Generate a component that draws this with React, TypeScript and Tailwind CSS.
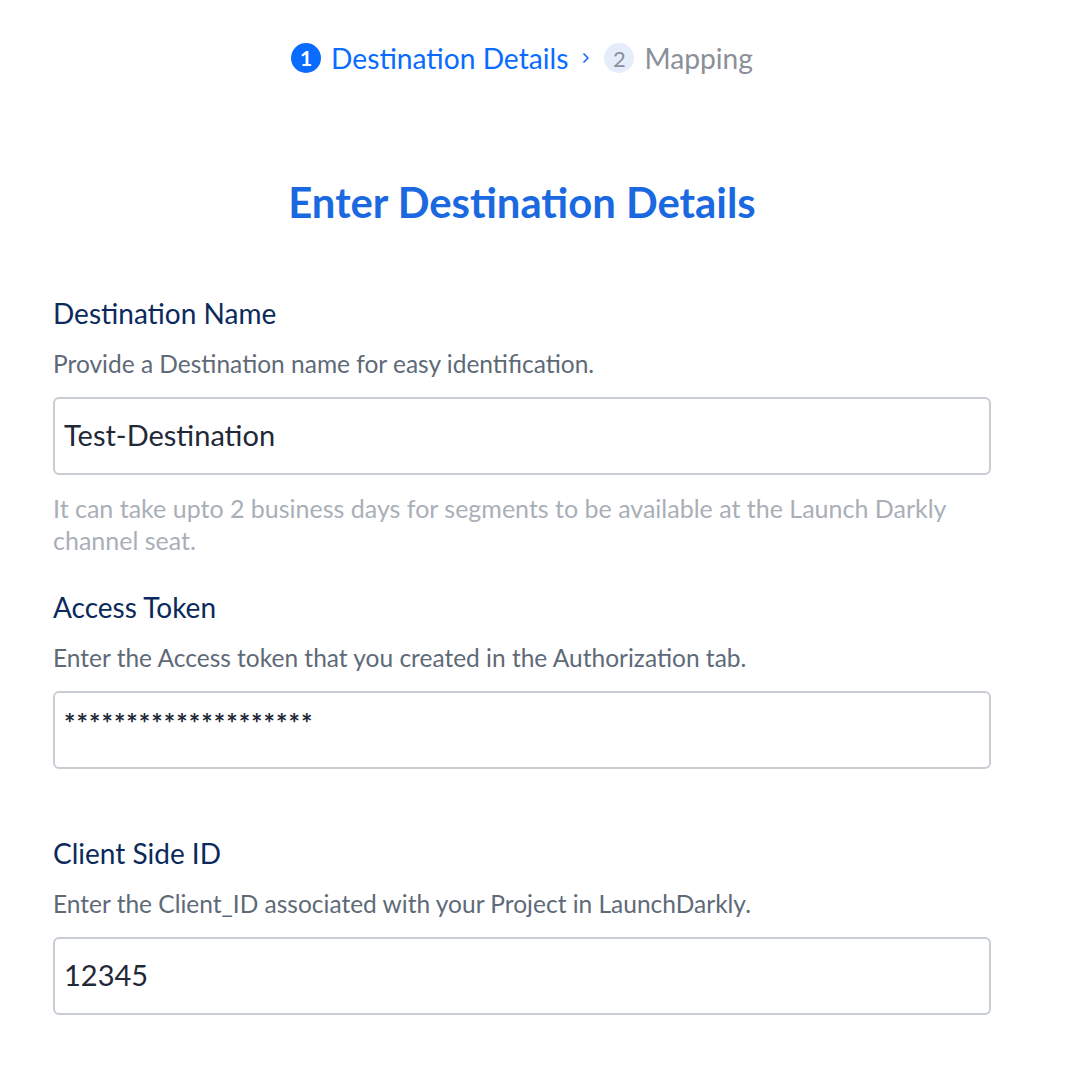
import { ChevronRight } from "lucide-react";

const font = { fontFamily: "Lato, 'Noto Sans', sans-serif" };

function Field({
  label,
  hint,
  value,
  note,
  mono,
}: {
  label: string;
  hint: string;
  value: string;
  note?: string;
  mono?: boolean;
}) {
  return (
    <div className="flex flex-col">
      <label className="text-[28px] leading-[36px] text-[#0b2a5c]">{label}</label>
      <p className="mt-[17px] text-[24.5px] leading-[32px] text-[#5e6a78]">{hint}</p>
      <div className="mt-[17px] h-[78px] rounded-[6px] border-2 border-[#c9cdd4] bg-white px-[9px] flex items-center">
        {mono ? (
          <span className="-mt-[14px] text-[27px] font-bold tracking-[1px] text-[#1f2937]">{value}</span>
        ) : (
          <span className="-mt-[2px] text-[29px] text-[#1f2937]">{value}</span>
        )}
      </div>
      {note !== undefined &&
        (note ? (
          <p className="mt-[17px] text-[25px] leading-[32px] text-[#a9afb7]">{note}</p>
        ) : (
          <div className="mt-[17px] h-[16px]" />
        ))}
    </div>
  );
}

export default function App() {
  return (
    <div className="min-h-[1070px] w-full bg-white" style={font}>
      <div className="ml-[53px] w-[938px] pt-[40px]">
        <div className="flex h-[36px] items-center justify-center gap-[10px]">
          <span className="flex h-[30px] w-[30px] items-center justify-center rounded-full bg-[#0a6cff] text-[21px] font-bold text-white">
            1
          </span>
          <span className="text-[28.2px] leading-[36px] text-[#0a6cff]">Destination Details</span>
          <ChevronRight className="h-[16px] w-[16px] text-[#0a6cff]" strokeWidth={2.5} />
          <span className="flex h-[30px] w-[30px] items-center justify-center rounded-full bg-[#e5edfb] text-[22px] text-[#8a9099]">
            2
          </span>
          <span className="text-[28.2px] leading-[36px] text-[#8a9099]">Mapping</span>
        </div>

        <h1 className="mt-[102px] text-center text-[41.8px] font-bold leading-[48px] text-[#1a69e0]">
          Enter Destination Details
        </h1>

        <div className="mt-[69px] flex flex-col gap-[33px]">
          <Field
            label="Destination Name"
            hint="Provide a Destination name for easy identification."
            value="Test-Destination"
            note="It can take upto 2 business days for segments to be available at the Launch Darkly channel seat."
          />
          <Field
            label="Access Token"
            hint="Enter the Access token that you created in the Authorization tab."
            value="********************"
            mono
            note=""
          />
          <Field
            label="Client Side ID"
            hint="Enter the Client_ID associated with your Project in LaunchDarkly."
            value="12345"
          />
        </div>
      </div>
    </div>
  );
}
